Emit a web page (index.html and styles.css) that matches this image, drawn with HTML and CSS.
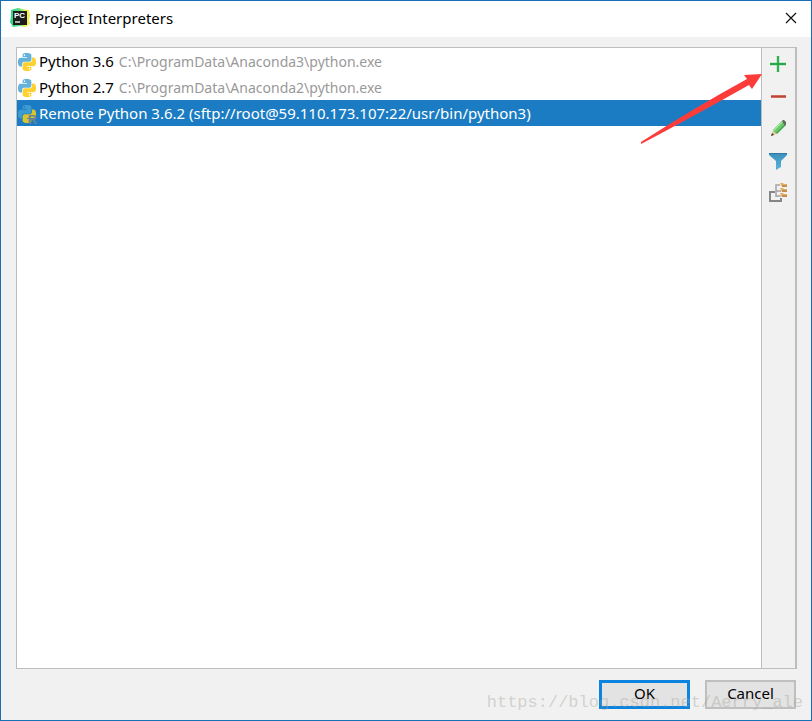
FILE: index.html
```html
<!DOCTYPE html>
<html lang="en">
<head>
<meta charset="utf-8">
<title>Project Interpreters</title>
<link rel="stylesheet" href="styles.css">
</head>
<body>
<svg class="defs" aria-hidden="true">
  <defs>
    <path id="snake" d="M14.25.18l.9.2.73.26.59.3.45.32.34.34.25.34.16.33.1.3.04.26.02.2-.01.13V8.5l-.05.63-.13.55-.21.46-.26.38-.3.31-.33.25-.35.19-.35.14-.33.1-.3.07-.26.04-.21.02H8.77l-.69.05-.59.14-.5.22-.41.27-.33.32-.27.35-.2.36-.15.37-.1.35-.07.32-.04.27-.02.21v3.06H3.17l-.21-.03-.28-.07-.32-.12-.35-.18-.36-.26-.36-.36-.35-.46-.32-.59-.28-.73-.21-.88-.14-1.05-.05-1.23.06-1.22.16-1.04.24-.87.32-.71.36-.57.4-.44.42-.33.42-.24.4-.16.36-.1.32-.05.24-.01h.16l.06.01h8.16v-.83H6.18l-.01-2.75-.02-.37.05-.34.11-.31.17-.28.25-.26.31-.23.38-.2.44-.18.51-.15.58-.12.64-.1.71-.06.77-.04.84-.02 1.27.05zm-6.3 1.98l-.23.33-.08.41.08.41.23.34.33.22.41.09.41-.09.33-.22.23-.34.08-.41-.08-.41-.23-.33-.33-.22-.41-.09-.41.09z"/>
    <g id="python">
      <use href="#snake" fill="#64b1da"/>
      <use href="#snake" fill="#ffd130" transform="rotate(180 12 12)"/>
    </g>
    <linearGradient id="logo" x1="0" y1="0" x2="1" y2="0">
      <stop offset="0" stop-color="#20d68a"/><stop offset=".5" stop-color="#5fe07c"/><stop offset=".75" stop-color="#f3f14f"/><stop offset="1" stop-color="#f3f14f"/>
    </linearGradient>
    <linearGradient id="blue" x1="0" y1="0" x2="0" y2="1">
      <stop offset="0" stop-color="#3b8fbb"/><stop offset="1" stop-color="#59b4da"/>
    </linearGradient>
  </defs>
</svg>
<main class="dialog">
  <header class="titlebar">
    <svg class="app-icon" viewBox="0 0 20 20" aria-hidden="true">
      <path d="M1 2 8 0l4 1 7 1 1 6-1 4 1 4-4 3-6-1-7 1-3-5 1-5z" fill="url(#logo)"/>
      <path d="M3 3h14v14H3z" fill="#1b1d1c"/>
      <text class="logo-text" x="4" y="10">PC</text>
      <path d="M5 14h5" stroke="#fff" stroke-width="1.3"/>
    </svg>
    <h1 class="title">Project Interpreters</h1>
    <button class="close" aria-label="Close">
      <svg viewBox="0 0 12 12" width="12" height="12"><path d="M1 1l10 10M11 1 1 11" stroke="#111" stroke-width="1.2"/></svg>
    </button>
  </header>
  <section class="panel">
    <ul class="list">
      <li class="row"><svg class="python" viewBox="0 0 24 24"><use href="#python"/></svg><span>Python 3.6</span><span class="path">C:\ProgramData\Anaconda3\python.exe</span></li>
      <li class="row"><svg class="python" viewBox="0 0 24 24"><use href="#python"/></svg><span>Python 2.7</span><span class="path">C:\ProgramData\Anaconda2\python.exe</span></li>
      <li class="row selected"><svg class="python" viewBox="0 0 24 24"><use href="#snake" fill="#3c9bd0"/><use href="#snake" fill="#d9c62c" transform="rotate(180 12 12)"/><text class="remote" x="13" y="25">R</text></svg><span>Remote Python 3.6.2 (sftp://root@59.110.173.107:22/usr/bin/python3)</span></li>
    </ul>
    <div class="tools">
      <button class="tool" aria-label="Add">
        <svg viewBox="0 0 20 20"><path d="M10 2v16M2 10h16" stroke="#a3dfb1" stroke-width="3"/><path d="M10 2v16M2 10h16" stroke="#26a849" stroke-width="1.8"/></svg>
      </button>
      <button class="tool" aria-label="Remove">
        <svg viewBox="0 0 20 20"><path d="M3 9h15v3H3z" fill="#cf6a5c"/><path d="M3 10h15v1H3z" fill="#bb4536"/></svg>
      </button>
      <button class="tool" aria-label="Edit">
        <svg viewBox="0 0 20 20"><path d="M3 18 5 12l4 4z" fill="#e3c995"/><path d="M3 18l1-3 2 2z" fill="#3b3b3b"/><path d="M5 12 14 3l4 4-9 9z" fill="#43a34d"/><path d="M5 12 14 3l3 3-9 9z" fill="#6cc76c"/><path d="M5 12 14 3l1 1-9 9z" fill="#a5eb9d"/><path d="m14 3 1-1h1l2 2v2l-1 2z" fill="#626762"/></svg>
      </button>
      <button class="tool" aria-label="Filter">
        <svg viewBox="0 0 20 20"><path d="M1 3h18v2l-6 6v6l-5 3v-9L1 5z" fill="url(#blue)"/><path d="M1 3h18v1H1z" fill="#3078a3"/></svg>
      </button>
      <button class="tool" aria-label="Show paths for the selected interpreter">
        <svg viewBox="0 0 20 20"><path d="M12 3H8v12M8 9h5M8 14h5" fill="none" stroke="#a4a4a4" stroke-width="1.5"/><path d="M7 10H2v9h11v-3" fill="none" stroke="#868686" stroke-width="2"/><g fill="#e2ae68"><path d="M12 1h3l1 1h3v3h-5z"/><path d="M12 6h3l1 1h3v3h-5z"/><path d="M12 11h3l1 1h3v3h-5z"/></g><path d="M14 4h5M14 9h5M14 14h5" stroke="#a86f32"/></svg>
      </button>
      <svg class="arrow" viewBox="0 0 124 72" aria-hidden="true"><path d="M4 70 2 71l0-2Q55 35 108 6l-3-4 18-1-10 15-3-4Q55 43 4 70z" fill="#fd3c3a"/></svg>
    </div>
  </section>
  <footer class="actions">
    <button class="btn primary">OK</button>
    <button class="btn">Cancel</button>
    <span class="watermark">https://blog.csdn.net/Aerry_ale</span>
  </footer>
</main>
</body>
</html>
```
FILE: styles.css
```css
* { box-sizing: border-box; }
body {
  margin: 0;
  font-family: "Noto Sans", "Open Sans", sans-serif;
  font-size: 15px;
  color: #000;
}
button { font: inherit; color: inherit; }
.defs { position: absolute; width: 0; height: 0; }
.dialog {
  display: flex;
  flex-direction: column;
  min-height: 100vh;
  border: 1px solid #186fb5;
  background: #f1f1f1;
}
.titlebar {
  display: flex;
  align-items: center;
  height: 36px;
  padding: 0 14px 2px 9px;
  background: #fff;
}
.app-icon { width: 20px; height: 20px; }
.logo-text { font: bold 8px "Liberation Sans", sans-serif; fill: #fff; }
.title { flex: 1; margin: 0 0 0 5px; font-size: 15px; font-weight: 400; }
.close { display: flex; padding: 0; border: 0; background: none; }
.panel {
  flex: 1;
  display: flex;
  margin: 10px 14px 0 15px;
  border: 1px solid #bdbdbd;
  border-right-width: 2px;
}
.list { flex: 1; margin: 0; padding: 0; background: #fff; list-style: none; }
.row {
  display: flex;
  align-items: center;
  height: 26px;
  padding-left: 1px;
  gap: 3px;
  white-space: nowrap;
}
.selected { background: #1b7cc3; color: #fff; }
.python { width: 18px; height: 18px; margin-top: 2px; overflow: visible; }
.remote { font: bold 17px "Liberation Sans", sans-serif; fill: #6f8291; }
.path { margin-left: 2px; font-size: 14px; color: #999; }
.tools {
  position: relative;
  display: flex;
  flex-direction: column;
  align-items: center;
  width: 34px;
  padding: 6px 2px 6px 0;
  gap: 12px;
  border-left: 1px solid #bdbdbd;
}
.tool { width: 20px; height: 20px; padding: 0; border: 0; background: none; }
.tool svg { display: block; width: 20px; height: 20px; }
.arrow { position: absolute; top: 25px; right: 32px; width: 124px; height: 72px; }
.actions {
  position: relative;
  display: flex;
  justify-content: flex-end;
  gap: 15px;
  padding: 11px 15px;
}
.btn {
  width: 91px;
  height: 29px;
  padding: 0 0 3px;
  border: 2px solid #bfbfbf;
  background: #e3e3e3;
  font-size: 15px;
  line-height: 20px;
}
.primary { border: 3px solid #0c84df; }
.watermark {
  position: absolute;
  right: 8px;
  bottom: 8px;
  font: 17px "Liberation Mono", monospace;
  color: rgba(160, 160, 150, .4);
  pointer-events: none;
}
```
